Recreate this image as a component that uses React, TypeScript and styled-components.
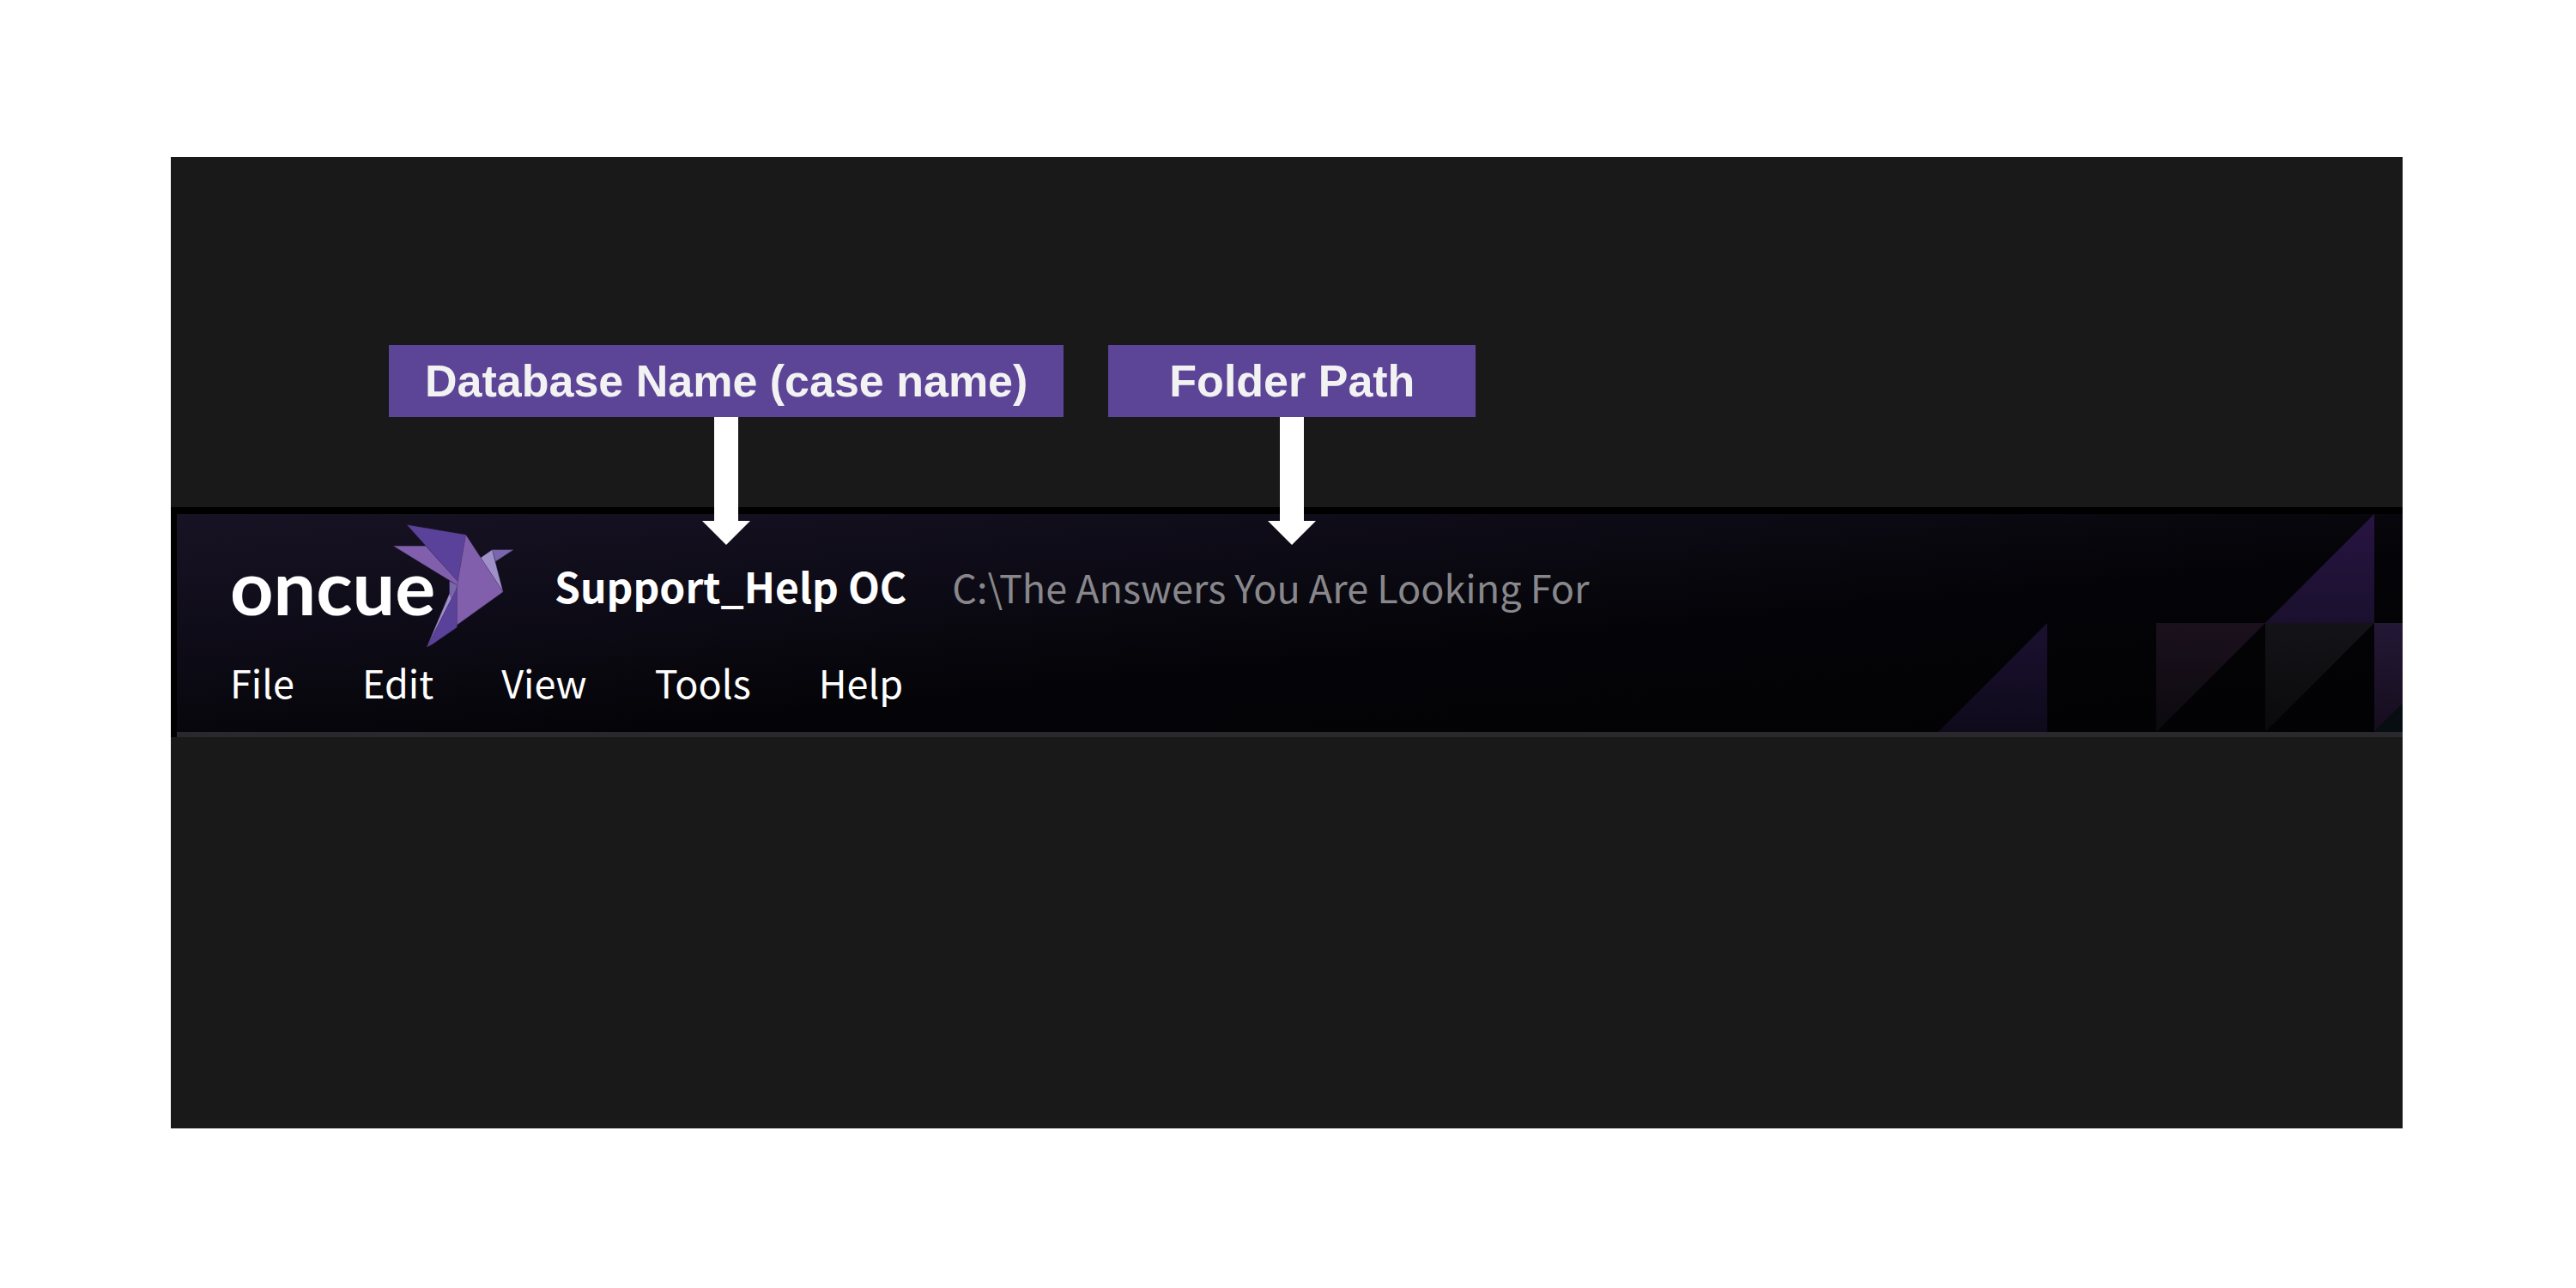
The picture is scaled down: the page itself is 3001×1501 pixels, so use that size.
import React from "react";
import styled, { createGlobalStyle } from "styled-components";

const GlobalStyle = createGlobalStyle`
  * { box-sizing: border-box; }
  body { margin: 0; background: #ffffff; }
`;

const uiFont = `"Noto Sans CJK JP", "Noto Sans", sans-serif`;

const Page = styled.main`
  padding: 183px 202px 186px 199px;
`;

const Stage = styled.section`
  background: #191919;
  padding: 219px 0 456px;
`;

const Callouts = styled.div`
  display: flex;
  gap: 52px;
  padding-left: 254px;
  margin-bottom: 105px;
`;

const Callout = styled.div<{ $pad: number }>`
  position: relative;
  z-index: 1;
  padding: 12px ${(p) => p.$pad}px;
  background: #5c4496;
  color: #f2f2f2;
  font: bold 52px/60px "Liberation Sans", Arial, sans-serif;
  white-space: nowrap;
`;

const Arrow = styled.svg`
  position: absolute;
  top: 100%;
  left: 50%;
  margin-left: -28px;
  display: block;
`;

const AppHeader = styled.header`
  background: #000000;
  padding: 8px 0 0 7px;
`;

const TitleBar = styled.div`
  position: relative;
  height: 260px;
  padding: 10px 0 0 62px;
  border-bottom: 6px solid #28282d;
  background: linear-gradient(
    to bottom right,
    #181324 0%,
    #0f0c19 28%,
    #09080f 45%,
    #040307 60%,
    #020204 100%
  );
`;

const Pattern = styled.svg`
  position: absolute;
  right: 0;
  top: 0;
  display: block;
`;

const TitleRow = styled.div`
  position: relative;
  display: flex;
  align-items: center;
  height: 148px;
  margin-bottom: 2px;
`;

const Logo = styled.div`
  display: flex;
  align-items: center;
  width: 378px;
`;

const Wordmark = styled.span`
  color: #ffffff;
  font: bold 88px/148px Lato, sans-serif;
`;

const Bird = styled.svg`
  display: block;
  flex: none;
  margin-left: -49px;
`;

const CaseTitle = styled.div`
  display: flex;
  align-items: baseline;
  gap: 53px;
`;

const CaseName = styled.h1`
  margin: 0;
  color: #ffffff;
  font: 700 48px/72px ${uiFont};
  white-space: nowrap;
`;

const FolderPath = styled.span`
  color: #88878b;
  font: 400 45px/72px ${uiFont};
  white-space: nowrap;
`;

const Menu = styled.nav`
  position: relative;
  display: flex;
  gap: 79px;
`;

const MenuItem = styled.button`
  border: 0;
  padding: 0;
  background: none;
  color: #ffffff;
  font: 400 45px/72px ${uiFont};
  cursor: pointer;
`;

const menus = ["File", "Edit", "View", "Tools", "Help"];

function DownArrow() {
  return (
    <Arrow width="56" height="149" viewBox="0 0 56 149" aria-hidden="true">
      <path d="M14 0H42V121H56L28 149L0 121H14Z" fill="#fff" />
    </Arrow>
  );
}

function Hummingbird() {
  return (
    <Bird width="142" height="144" viewBox="56 30 426 432" aria-hidden="true">
      <g stroke="#4b3a72" strokeWidth="1" strokeLinejoin="round">
        <path d="M253 228L281 243L270 285L253 320Z" fill="#7966ad" />
        <path d="M253 272L260 290L174 459Z" fill="#9f90c8" />
        <path d="M279 252V390L192 450L174 459Z" fill="#5a429a" />
        <path d="M57 106H170L283 230L281 243Z" fill="#825fad" />
        <path d="M105 32L310 67L282 230Z" fill="#5a429a" />
        <path d="M402 119H476L414 160Z" fill="#7966ad" />
        <path d="M362 147L402 119L440 266Z" fill="#9f90c8" />
        <path d="M310 67L440 266L279 382V260L282 230Z" fill="#825fad" />
      </g>
    </Bird>
  );
}

function Triangles() {
  return (
    <Pattern width="541" height="254" viewBox="0 0 541 254" aria-hidden="true">
      <defs>
        <linearGradient id="violet" x1="0" y1="0" x2="0" y2="1">
          <stop offset="0" stopColor="#281442" />
          <stop offset="1" stopColor="#1a102e" />
        </linearGradient>
        <linearGradient id="indigo" x1="0" y1="0" x2="0" y2="1">
          <stop offset="0" stopColor="#1b1130" />
          <stop offset="1" stopColor="#0e0a1b" />
        </linearGradient>
        <linearGradient id="plum" x1="0" y1="0" x2="0" y2="1">
          <stop offset="0" stopColor="#1b111d" />
          <stop offset="1" stopColor="#0c090f" />
        </linearGradient>
        <linearGradient id="grey" x1="0" y1="0" x2="0" y2="1">
          <stop offset="0" stopColor="#141317" />
          <stop offset="1" stopColor="#0a090c" />
        </linearGradient>
        <linearGradient id="edge" x1="0" y1="0" x2="0" y2="1">
          <stop offset="0" stopColor="#231835" />
          <stop offset="1" stopColor="#150d1d" />
        </linearGradient>
      </defs>
      <path d="M0 254L127 127V254Z" fill="url(#indigo)" />
      <path d="M254 127H381L254 254Z" fill="url(#plum)" />
      <path d="M381 127H508L381 254Z" fill="url(#grey)" />
      <path d="M381 127L508 0V127Z" fill="url(#violet)" />
      <path d="M508 127H541V221L508 254Z" fill="url(#edge)" />
      <path d="M541 221V254H508Z" fill="#070d11" />
    </Pattern>
  );
}

export default function App() {
  return (
    <Page>
      <GlobalStyle />
      <Stage>
        <Callouts>
          <Callout $pad={42}>
            Database Name (case name)
            <DownArrow />
          </Callout>
          <Callout $pad={71}>
            Folder Path
            <DownArrow />
          </Callout>
        </Callouts>
        <AppHeader>
          <TitleBar>
            <Triangles />
            <TitleRow>
              <Logo>
                <Wordmark>oncue</Wordmark>
                <Hummingbird />
              </Logo>
              <CaseTitle>
                <CaseName>Support_Help OC</CaseName>
                <FolderPath>C:\The Answers You Are Looking For</FolderPath>
              </CaseTitle>
            </TitleRow>
            <Menu aria-label="Main menu">
              {menus.map((name) => (
                <MenuItem key={name} type="button">
                  {name}
                </MenuItem>
              ))}
            </Menu>
          </TitleBar>
        </AppHeader>
      </Stage>
    </Page>
  );
}
